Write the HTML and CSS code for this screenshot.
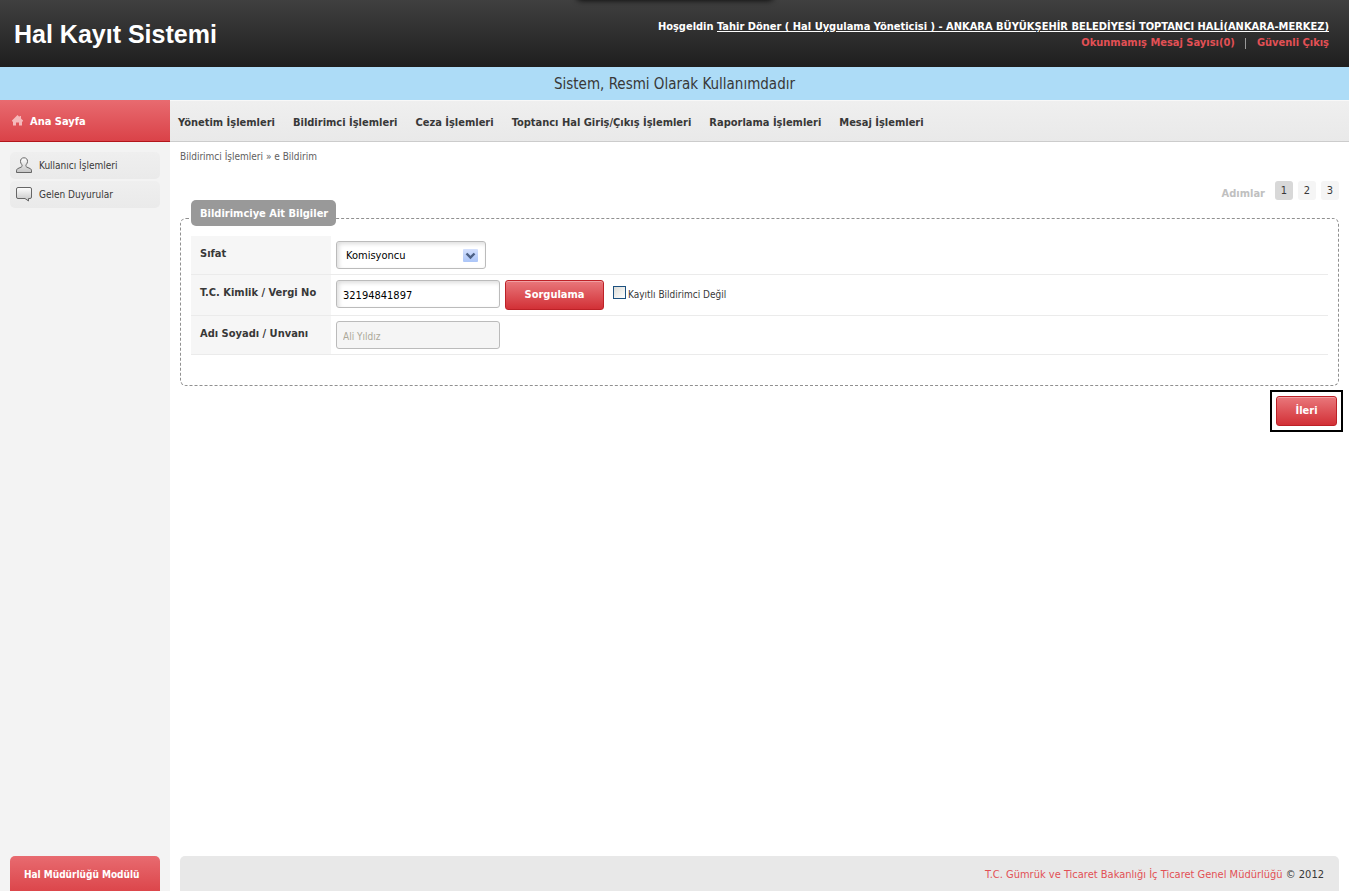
FILE: index.html
```html
<!DOCTYPE html>
<html lang="tr">
<head>
<meta charset="utf-8">
<title>Hal Kayıt Sistemi</title>
<link rel="stylesheet" href="styles.css">
</head>
<body>
<header class="header">
  <div class="drawer"></div>
  <h1 class="logo">Hal Kayıt Sistemi</h1>
  <div class="account">
    <div class="welcome">Hoşgeldin <a class="user" href="#">Tahir Döner ( Hal Uygulama Yöneticisi ) - ANKARA BÜYÜKŞEHİR BELEDİYESİ TOPTANCI HALİ(ANKARA-MERKEZ)</a></div>
    <div class="session"><a href="#">Okunmamış Mesaj Sayısı(0)</a><span class="divider"></span><a href="#">Güvenli Çıkış</a></div>
  </div>
</header>
<div class="notice">Sistem, Resmi Olarak Kullanımdadır</div>
<div class="page">
  <aside class="sidebar">
    <a class="home" href="#">
      <svg width="11" height="11" viewBox="0 0 11 11" aria-hidden="true"><path fill="#f5b9bb" d="M5.500 0 7.500 2V1h1.500v2.500L11 5.500V6.500H10v4H7V7.500H4v3H1v-4H0v-1z"/></svg>
      <span>Ana Sayfa</span>
    </a>
    <ul class="side-menu">
      <li><a class="side-link" href="#">
        <svg width="16" height="17" viewBox="0 0 16 17" aria-hidden="true"><defs><linearGradient id="shade" x1="0" y1="0" x2="0" y2="1"><stop offset="0" stop-color="#fff"/><stop offset="1" stop-color="#c4c4c4"/></linearGradient></defs><path fill="url(#shade)" stroke="#666" d="M8 .8c-2.400 0-3.500 1.500-3.500 3.600 0 1.300.5 2.300 1.300 3.200.5.700.4 2-.4 2.400L2 11.500C.9 12 .5 12.700.5 14v1.500h15V14c0-1.300-.4-2-1.500-2.500L10.600 10c-.8-.4-.9-1.700-.4-2.400.8-.9 1.300-1.900 1.300-3.200C11.500 2.300 10.400.8 8 .8z"/></svg>
        <span>Kullanıcı İşlemleri</span></a></li>
      <li><a class="side-link" href="#">
        <svg width="16" height="15" viewBox="0 0 16 15" aria-hidden="true"><path fill="url(#shade)" stroke="#666" d="M2 .5h12q1.500 0 1.500 1.500v8q0 1.500-1.500 1.500h-1.500V14L9 11.500H2Q.5 11.500.5 10V2Q.5.500 2 .5z"/></svg>
        <span>Gelen Duyurular</span></a></li>
    </ul>
    <a class="module" href="#">Hal Müdürlüğü Modülü</a>
  </aside>
  <main class="main">
    <nav class="nav">
      <a href="#">Yönetim İşlemleri</a>
      <a href="#">Bildirimci İşlemleri</a>
      <a href="#">Ceza İşlemleri</a>
      <a href="#">Toptancı Hal Giriş/Çıkış İşlemleri</a>
      <a href="#">Raporlama İşlemleri</a>
      <a href="#">Mesaj İşlemleri</a>
    </nav>
    <div class="content">
      <div class="crumbs">Bildirimci İşlemleri » e Bildirim</div>
      <div class="steps"><span class="steps-label">Adımlar</span><span class="step current">1</span><span class="step">2</span><span class="step">3</span></div>
      <form class="form">
        <div class="panel">
          <h2 class="panel-title">Bildirimciye Ait Bilgiler</h2>
          <div class="row">
            <label class="label" for="role">Sıfat</label>
            <div class="cell">
              <div class="select-wrap">
                <select class="field select" id="role"><option>Komisyoncu</option></select>
                <svg class="arrow" width="15" height="13" viewBox="0 0 15 13" aria-hidden="true"><defs><linearGradient id="blue" x1="0" y1="0" x2="0" y2="1"><stop offset="0" stop-color="#d4e0fd"/><stop offset="1" stop-color="#abc5f8"/></linearGradient></defs><rect width="15" height="13" rx="1" fill="url(#blue)"/><path d="M3.500 4.500 7.500 8.500 11.500 4.500" fill="none" stroke="#4d6185" stroke-width="2.400"/></svg>
              </div>
            </div>
          </div>
          <div class="row">
            <label class="label" for="taxno">T.C. Kimlik / Vergi No</label>
            <div class="cell">
              <input class="field" id="taxno" type="text" value="32194841897">
              <button class="button query" type="button">Sorgulama</button>
              <label class="check"><input class="box" type="checkbox"><span>Kayıtlı Bildirimci Değil</span></label>
            </div>
          </div>
          <div class="row">
            <label class="label" for="fullname">Adı Soyadı / Unvanı</label>
            <div class="cell"><input class="field" id="fullname" type="text" value="Ali Yıldız" disabled></div>
          </div>
        </div>
        <div class="actions"><div class="highlight"><button class="button next" type="button">İleri</button></div></div>
      </form>
      <footer class="footer"><a href="#">T.C. Gümrük ve Ticaret Bakanlığı İç Ticaret Genel Müdürlüğü</a> © 2012</footer>
    </div>
  </main>
</div>
</body>
</html>
```
FILE: styles.css
```css
* { box-sizing: border-box; }
body {
  margin: 0;
  min-height: 100vh;
  display: flex;
  flex-direction: column;
  font: 11px/16px "DejaVu Sans Condensed", "DejaVu Sans", sans-serif;
  color: #383838;
  background: #fff;
}
a { color: inherit; text-decoration: none; }
input, select, button { font: inherit; margin: 0; }

.header {
  position: relative;
  overflow: hidden;
  height: 67px;
  padding: 0 20px 0 14px;
  display: flex;
  justify-content: space-between;
  background: linear-gradient(#404040, #1e1e1e);
}
.drawer {
  position: absolute;
  top: -10px;
  left: calc(50% - 98px);
  width: 196px;
  height: 10px;
  border-radius: 4px;
  box-shadow: 0 0 6px #000;
}
.logo {
  margin: 0;
  padding-top: 17px;
  font: bold 25px/34px "Liberation Sans", sans-serif;
  color: #fff;
}
.account { padding-top: 19px; text-align: right; font-weight: bold; color: #fff; }
.user { text-decoration: underline; }
.session { display: flex; justify-content: flex-end; align-items: center; color: #e25055; }
.divider { width: 1px; height: 11px; margin: 0 11px 0 10px; background: #999; }

.notice {
  height: 33px;
  text-align: center;
  font-size: 15px;
  line-height: 34px;
  background: #addcf7;
}

.page { flex: 1; display: flex; }
.sidebar { width: 170px; flex: none; display: flex; flex-direction: column; background: #f3f3f3; }
.home {
  height: 42px;
  padding-left: 12px;
  display: flex;
  align-items: center;
  gap: 7px;
  font-weight: bold;
  color: #fff;
  background: linear-gradient(#e86b70, #da4248);
  border-bottom: 1px solid #b3151b;
}
.home span { padding-top: 3px; }
.side-menu { list-style: none; margin: 0; padding: 10px; display: grid; gap: 2px; font-size: 10px; }
.side-link {
  height: 27px;
  padding: 0 6px;
  display: flex;
  align-items: center;
  gap: 7px;
  border-radius: 5px;
  background: linear-gradient(#efefef, #eaeaea);
}
.module {
  margin: auto 10px 0;
  height: 35px;
  padding-left: 14px;
  line-height: 37px;
  font-size: 10px;
  font-weight: bold;
  color: #fff;
  border-radius: 5px 5px 0 0;
  background: linear-gradient(#e86b70, #dc464b);
}

.main { flex: 1; min-width: 0; display: flex; flex-direction: column; }
.nav {
  height: 42px;
  padding: 3px 8px 0;
  display: flex;
  align-items: center;
  gap: 18px;
  white-space: nowrap;
  font-weight: bold;
  background: linear-gradient(#efefef, #e9e9e9);
  border-top: 1px solid #f8f8f8;
  border-bottom: 1px solid #ccc;
}
.content { flex: 1; padding: 7px 10px 0; display: flex; flex-direction: column; }
.crumbs { font-size: 10px; color: #606060; }
.steps { height: 20px; margin-top: 16px; display: flex; justify-content: flex-end; gap: 5px; }
.steps-label { margin-right: 5px; line-height: 25px; font-weight: bold; color: #c0c0c0; }
.step { width: 18px; height: 19px; line-height: 20px; text-align: center; border-radius: 3px; background: #f5f5f5; }
.step.current { background: #d8d8d8; }

.form { padding-top: 17px; }
.panel {
  position: relative;
  padding: 17px 10px 30px;
  border: 1px dashed #909090;
  border-radius: 6px;
}
.panel-title {
  position: absolute;
  top: -19px;
  left: 10px;
  margin: 0;
  height: 26px;
  width: 145px;
  padding-left: 9px;
  font-size: 11px;
  line-height: 28px;
  white-space: nowrap;
  color: #fff;
  background: #999;
  border-radius: 5px;
}
.row { display: flex; border-bottom: 1px solid #ebebeb; }
.label { width: 140px; padding: 10px 9px 8px; font-weight: bold; white-space: nowrap; background: #f6f6f6; }
.cell { padding: 5px; display: flex; align-items: flex-start; gap: 5px; }
.field {
  width: 164px;
  height: 28px;
  padding: 2px 6px 0;
  color: #000;
  background: #fff;
  border: 1px solid #bbb;
  border-radius: 3px;
  box-shadow: inset 2px 2px 4px #ddd;
}
.field:disabled { font-size: 10px; color: #aca899; background: #f5f5f5; box-shadow: none; }
.select-wrap { position: relative; }
.select { width: 150px; padding-left: 9px; appearance: none; }
.arrow { position: absolute; right: 8px; top: 8px; pointer-events: none; }
.button {
  height: 30px;
  padding: 0;
  font-weight: bold;
  color: #fff;
  border: 1px solid #bd2127;
  border-radius: 3px;
  background: linear-gradient(#e9777b, #d23036);
  box-shadow: inset 0 1px #f0a0a3;
}
.query { width: 99px; }
.check { padding: 6px 4px 0; display: flex; gap: 2px; font-size: 10px; }
.check span { line-height: 18px; }
.box {
  appearance: none;
  width: 13px;
  height: 13px;
  border: 1px solid #1c5180;
  background: linear-gradient(135deg, #dcdcd7, #fff);
}
.actions { display: flex; justify-content: flex-end; margin: 4px -4px 0 0; }
.highlight { padding: 4px; border: 2px solid #000; }
.next { width: 61px; display: block; }
.footer {
  height: 35px;
  margin-top: auto;
  padding-right: 15px;
  text-align: right;
  line-height: 37px;
  background: #e8e8e8;
  border-radius: 5px 5px 0 0;
}
.footer a { color: #e25055; }
```
